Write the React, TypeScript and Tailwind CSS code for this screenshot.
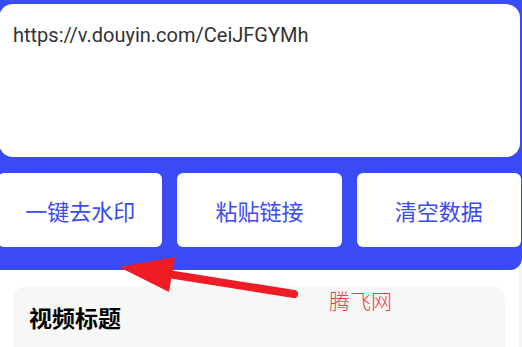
import React from 'react';

const actions = ['一键去水印', '粘贴链接', '清空数据'];

const Arrow: React.FC = () => (
  <svg
    className="absolute left-0 top-0 pointer-events-none"
    width="522"
    height="347"
    viewBox="0 0 522 347"
  >
    <line
      x1="168"
      y1="274"
      x2="294"
      y2="294"
      stroke="#ee1c25"
      strokeWidth="8"
      strokeLinecap="round"
    />
    <polygon points="119,267 175,257 169,292" fill="#ee1c25" />
  </svg>
);

export default function App() {
  return (
    <div
      className="relative w-[522px] h-[347px] overflow-hidden bg-[#f4f4f4]"
      style={{ fontFamily: 'Roboto, "Noto Sans CJK SC", sans-serif' }}
    >
      {/* Top panel */}
      <div className="relative z-10 bg-[#3a4bf6] rounded-br-[12px] pt-[4px] pb-[23px]">
        <div className="ml-[-1px] w-[521px] h-[153px] bg-white rounded-[14px] px-[14px] pt-[19px]">
          <p className="text-[20px] leading-[24px] text-[#333333]">
            https://v.douyin.com/CeiJFGYMh
          </p>
        </div>

        <div className="ml-[-2px] w-[523px] mt-[16px] grid grid-cols-3 gap-[15px]">
          {actions.map((label) => (
            <button
              key={label}
              className="h-[74px] bg-white rounded-[6px] text-[22px] text-[#3a4bf0]"
              style={{ fontFamily: '"Noto Sans CJK SC", sans-serif' }}
            >
              {label}
            </button>
          ))}
        </div>
      </div>

      {/* Content card */}
      <div className="mt-[-8px] w-[519px] bg-white rounded-r-[12px] pt-[24px] pl-[13px] pr-[14px] h-[200px]">
        <div className="bg-[#f7f7f7] rounded-[14px] h-[120px] px-[16px] pt-[16px]">
          <h2
            className="text-[23px] leading-[30px] font-bold text-black"
            style={{ fontFamily: '"Noto Sans CJK SC", sans-serif' }}
          >
            视频标题
          </h2>
        </div>
      </div>

      {/* Watermark */}
      <span
        className="absolute left-[329px] top-[285px] z-20 text-[21px] leading-[30px] font-light text-[#f03a48]"
        style={{ fontFamily: '"Noto Sans CJK SC", sans-serif' }}
      >
        腾飞网
      </span>

      <div className="absolute inset-0 z-20 pointer-events-none">
        <Arrow />
      </div>
    </div>
  );
}
